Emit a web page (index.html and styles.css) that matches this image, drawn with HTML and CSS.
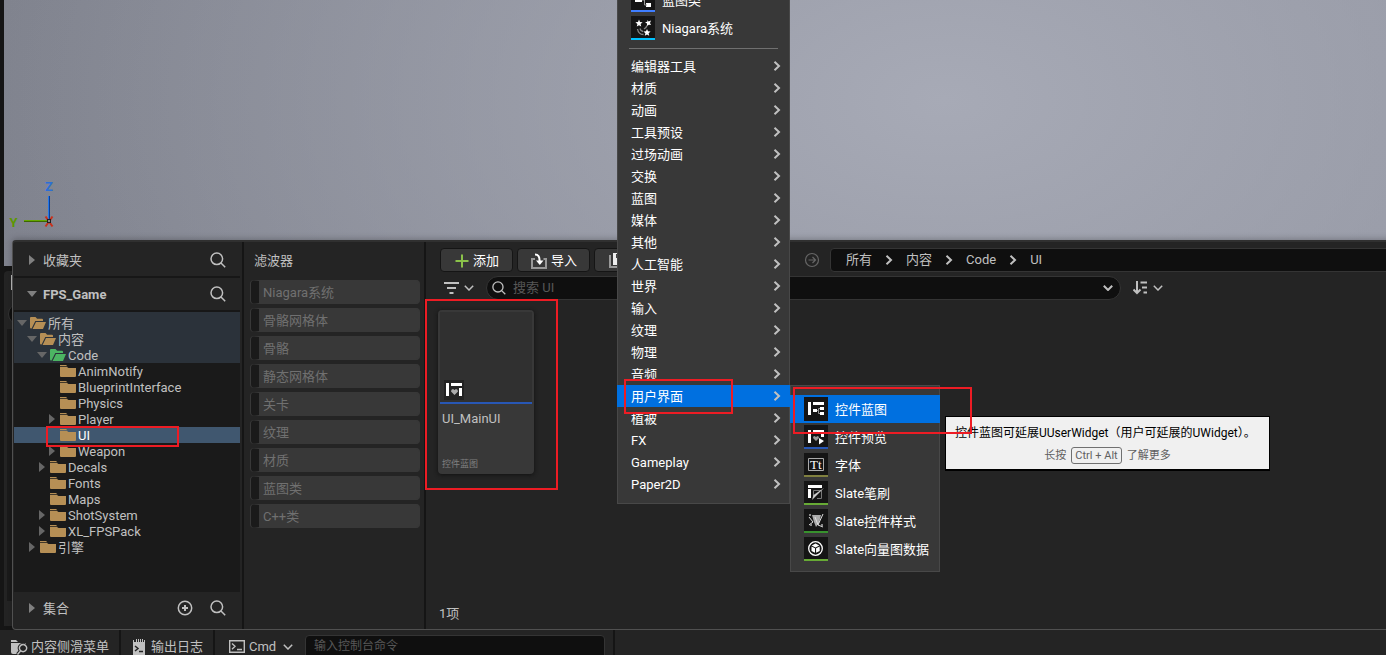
FILE: index.html
```html
<!DOCTYPE html>
<html lang="zh-CN">
<head>
    <meta charset="UTF-8">
    <title>FPS_Game</title>
    <link rel="stylesheet" href="styles.css">
</head>
<body>
<svg class="defs">
    <symbol id="search" viewBox="0 0 16 16"><circle cx="6.8" cy="6.8" r="5.8"/><path d="M11 11l4.2 4.2"/></symbol>
    <symbol id="right" viewBox="0 0 8 10"><path d="M1.5 .8L6 5 1.5 9.200"/></symbol>
    <symbol id="down" viewBox="0 0 10 6"><path d="M.8 .8L5 5 9.2 .8"/></symbol>
    <symbol id="folder" viewBox="0 0 16 12"><path d="M0 0h6l1.500 1.300H0zM0 2h7l1.500 1H16v8q0 1-1 1H1q-1 0-1-1z"/></symbol>
    <symbol id="open" viewBox="0 0 16 12"><path d="M0 1q0-1 1-1h4.500l1.600 1.800H12q1 0 1 1V4H5.300L1.600 11.500H1q-1 0-1-1zM6 5h10l-3 7H2.600z"/></symbol>
</svg>

<div class="viewport">
    <svg class="axis" width="48" height="52" viewBox="0 0 48 52">
        <path d="M37.500 16v24" stroke="#2476e8" stroke-width="1"/><path d="M38.500 16v24" stroke="#0c3f94" stroke-width="1"/>
        <path d="M13 40.500h23" stroke="#64a800"/><path d="M13 41.500h23" stroke="#3d6600"/>
        <path d="M34.500 36.500l7 10M41.500 36.500l-7 10" stroke="#c8301c" stroke-width="2"/>
        <rect x="36.500" y="39.500" width="3" height="3" fill="#888" stroke="#222"/>
        <text x="34" y="10.500" fill="#2c6fd6">Z</text>
        <text x="-1.500" y="46.500" fill="#5c9700">Y</text>
    </svg>
</div>
<div class="behind"><i></i><em></em><b></b></div>

<div class="drawer">
    <div class="sources">
        <div class="section fav"><i class="tri"></i><span>收藏夹</span><svg class="icon"><use href="#search"/></svg></div>
        <div class="section project"><i class="tri open"></i><span>FPS_Game</span><svg class="icon"><use href="#search"/></svg></div>
        <div class="tree">
            <div class="parents">
                <div class="node"><i class="tri open"></i><svg class="folder"><use href="#open"/></svg>所有</div>
                <div class="node d1"><i class="tri open"></i><svg class="folder"><use href="#open"/></svg>内容</div>
                <div class="node d2"><i class="tri open"></i><svg class="folder green"><use href="#open"/></svg>Code</div>
            </div>
            <div class="node d3"><i class="tri none"></i><svg class="folder"><use href="#folder"/></svg>AnimNotify</div>
            <div class="node d3"><i class="tri none"></i><svg class="folder"><use href="#folder"/></svg>BlueprintInterface</div>
            <div class="node d3"><i class="tri none"></i><svg class="folder"><use href="#folder"/></svg>Physics</div>
            <div class="node d3"><i class="tri"></i><svg class="folder"><use href="#folder"/></svg>Player</div>
            <div class="node d3 selected"><i class="tri none"></i><svg class="folder"><use href="#folder"/></svg>UI</div>
            <div class="node d3"><i class="tri"></i><svg class="folder"><use href="#folder"/></svg>Weapon</div>
            <div class="node d2"><i class="tri"></i><svg class="folder"><use href="#folder"/></svg>Decals</div>
            <div class="node d2"><i class="tri none"></i><svg class="folder"><use href="#folder"/></svg>Fonts</div>
            <div class="node d2"><i class="tri none"></i><svg class="folder"><use href="#folder"/></svg>Maps</div>
            <div class="node d2"><i class="tri"></i><svg class="folder"><use href="#folder"/></svg>ShotSystem</div>
            <div class="node d2"><i class="tri"></i><svg class="folder"><use href="#folder"/></svg>XL_FPSPack</div>
            <div class="node d1"><i class="tri"></i><svg class="folder"><use href="#folder"/></svg>引擎</div>
        </div>
        <div class="section collections"><i class="tri"></i><span>集合</span>
            <svg class="icon" viewBox="0 0 16 16"><circle cx="8" cy="8" r="6.700"/><path d="M8 5v6M5 8h6" stroke-width="2"/></svg>
            <svg class="icon"><use href="#search"/></svg></div>
    </div>

    <div class="filters">
        <div class="title">滤波器</div>
        <div class="filter">Niagara系统</div>
        <div class="filter">骨骼网格体</div>
        <div class="filter">骨骼</div>
        <div class="filter">静态网格体</div>
        <div class="filter">关卡</div>
        <div class="filter">纹理</div>
        <div class="filter">材质</div>
        <div class="filter">蓝图类</div>
        <div class="filter">C++类</div>
    </div>

    <div class="assets">
        <div class="toolbar">
            <div class="button add"><svg width="14" height="14" viewBox="0 0 14 14"><path d="M7 .5v13M.5 7h13" stroke="#8bc24a" stroke-width="2"/></svg>添加</div>
            <div class="button import"><svg width="16" height="16" viewBox="0 0 16 16" fill="none"><path d="M4 6H1v9h14V6h-2.500" stroke="#999" stroke-width="2"/><path d="M4 1.500q5 0 4.500 7" stroke="#fff" stroke-width="2"/><path d="M5 7.500h7.500L8.800 12z" fill="#fff"/></svg>导入</div>
            <div class="button save"><svg width="16" height="16" viewBox="0 0 16 16"><path d="M1 2v12h12" stroke="#999" stroke-width="2" fill="none"/><path d="M4 0h12v12H4z" fill="#eee"/><path d="M7 1h5v4H7z" fill="#444"/></svg></div>
            <svg class="forward" width="16" height="16" viewBox="0 0 16 16"><circle cx="8" cy="8" r="6.500"/><path d="M4.500 8h7M8.500 5l3 3-3 3"/></svg>
            <div class="crumbs">
                <span>所有</span><svg class="right"><use href="#right"/></svg>
                <span>内容</span><svg class="right"><use href="#right"/></svg>
                <span>Code</span><svg class="right"><use href="#right"/></svg>
                <span>UI</span>
            </div>
        </div>
        <div class="searchbar">
            <svg class="lines" width="15" height="12" viewBox="0 0 15 12"><path d="M0 1h15M3 6h9M5.500 11h4" stroke="#c0c0c0" stroke-width="2"/></svg>
            <svg class="down"><use href="#down"/></svg>
            <div class="search"><svg class="icon"><use href="#search"/></svg><span>搜索 UI</span><svg class="down bold"><use href="#down"/></svg></div>
            <svg class="sort" width="15" height="14" viewBox="0 0 15 14"><path d="M4 0v12M.5 8.500L4 12l3.500-3.500M7.500 1.500H14M9 6.500h5M10.500 11.500h3.500" fill="none" stroke="#c0c0c0" stroke-width="2"/></svg>
            <svg class="down"><use href="#down"/></svg>
        </div>
        <div class="card">
            <div class="thumb">
                <svg width="20" height="20" viewBox="0 0 20 20"><path d="M0 0h20v20H0z" fill="#222"/><path d="M2 3h3v13H2zM7 3h11v3H7zM15 8h3v8h-3z" fill="#fff"/><path d="M10.500 15L7 11.500Q7 9 9 9l1.500 1L12 9q2 0 2 2.500z" fill="#aaa"/></svg>
            </div>
            <div class="name">UI_MainUI</div>
            <div class="kind">控件蓝图</div>
        </div>
        <div class="count">1项</div>
    </div>
</div>

<div class="status">
    <div class="tab content"><svg width="17" height="16" viewBox="0 0 17 16"><path d="M0 1h5l2 2H0zM0 4h15v2q-5-2-6 3-.5 3 0 6H2q-2 0-2-2z" fill="#c0c0c0"/><path d="M12 5.500a3.600 3.600 0 1 0 .1 0M9.500 12l-3 3.500" fill="none" stroke="#242424" stroke-width="3.500"/><path d="M12 5.500a3.600 3.600 0 1 0 .1 0M9.500 12l-3 3.500" fill="none" stroke="#c0c0c0" stroke-width="1.400"/></svg>内容侧滑菜单</div>
    <div class="tab log"><svg width="12" height="16" viewBox="0 0 12 16"><path d="M0 1h1v2h2V0h1v3h1V0h1v3h1V0h1v3h1V0h1v3h1V1h1v15H0z" fill="#c0c0c0"/><path d="M2 7l3 2.500L2 12M6 12.500h4" fill="none" stroke="#222" stroke-width="1.500"/></svg>输出日志</div>
    <div class="tab cmd"><svg width="16" height="13" viewBox="0 0 16 13" fill="none" stroke="#c0c0c0" stroke-width="1.400"><path d="M.7.7h14.600v11.600H.7zM3 3.500L6 6.300 3 9.200M8 9.500h5"/></svg>Cmd<svg class="down"><use href="#down"/></svg></div>
    <div class="console">输入控制台命令</div>
    <div class="rest"></div>
</div>

<div class="menu main">
    <div class="asset bp"><svg width="24" height="22" viewBox="0 0 24 22"><path d="M4 9h7v5H4zM15 15h5v4h-5z" fill="#fff"/><path d="M11 12h2.500v5H16" stroke="#999" fill="none"/></svg>蓝图类</div>
    <div class="asset niagara"><svg width="24" height="22" viewBox="0 0 24 22"><path d="M8 3.500l1 2.500 2.600.2-2 1.800.6 2.600L8 9.200l-2.200 1.400.6-2.600-2-1.800L7 6zM16.500 4l1 1.500 2.500-1-1 2.500 1 2-2.200-.3-1.800 1.300v-2.500l-2-1.300 2.300-.5zM16 13l1 2.300 2.600.2-2 1.800.6 2.400-2.200-1.300-2.200 1.300.6-2.400-2-1.800 2.600-.2z" fill="#fff"/><path d="M6.500 13q1 5.500 6 5.500M9 12.500q.5 2.500 3 3M16 9.500q-.5 2-3 3.500" stroke="#888" stroke-width="1.300" fill="none"/></svg>Niagara系统</div>
    <div class="line"></div>
    <div class="item">编辑器工具<svg class="right"><use href="#right"/></svg></div>
    <div class="item">材质<svg class="right"><use href="#right"/></svg></div>
    <div class="item">动画<svg class="right"><use href="#right"/></svg></div>
    <div class="item">工具预设<svg class="right"><use href="#right"/></svg></div>
    <div class="item">过场动画<svg class="right"><use href="#right"/></svg></div>
    <div class="item">交换<svg class="right"><use href="#right"/></svg></div>
    <div class="item">蓝图<svg class="right"><use href="#right"/></svg></div>
    <div class="item">媒体<svg class="right"><use href="#right"/></svg></div>
    <div class="item">其他<svg class="right"><use href="#right"/></svg></div>
    <div class="item">人工智能<svg class="right"><use href="#right"/></svg></div>
    <div class="item">世界<svg class="right"><use href="#right"/></svg></div>
    <div class="item">输入<svg class="right"><use href="#right"/></svg></div>
    <div class="item">纹理<svg class="right"><use href="#right"/></svg></div>
    <div class="item">物理<svg class="right"><use href="#right"/></svg></div>
    <div class="item">音频<svg class="right"><use href="#right"/></svg></div>
    <div class="item hover">用户界面<svg class="right"><use href="#right"/></svg></div>
    <div class="item">植被<svg class="right"><use href="#right"/></svg></div>
    <div class="item">FX<svg class="right"><use href="#right"/></svg></div>
    <div class="item">Gameplay<svg class="right"><use href="#right"/></svg></div>
    <div class="item">Paper2D<svg class="right"><use href="#right"/></svg></div>
</div>

<div class="menu sub">
    <div class="asset hover"><svg width="24" height="22" viewBox="0 0 24 22"><path d="M4 5h3v13H4zM9 5h11v3H9zM9 12h4v3H9zM16 10h4v3h-4zM16 15h4v3h-4z" fill="#fff"/><path d="M13 13.500h1.500v3H16M14.500 13.500v-2H16" fill="none" stroke="#999"/></svg>控件蓝图</div>
    <div class="asset blue"><svg width="24" height="22" viewBox="0 0 24 22"><path d="M4 5h3v13H4zM9 5h11v3H9zM17 9h3v3h-3zM15 13l5 3-5 3.500z" fill="#fff"/><path d="M12 16l-3-3q0-2 1.500-2l1.500 1 1.500-1q1.500 0 1.500 2z" fill="#999"/></svg>控件预览</div>
    <div class="asset olive"><svg width="24" height="22" viewBox="0 0 24 22"><path d="M4.500 5.500h15v12h-15z" fill="none" stroke="#aaa"/><text x="6" y="16" class="tt">Tt</text></svg>字体</div>
    <div class="asset green"><svg width="24" height="22" viewBox="0 0 24 22"><path d="M4 4h14v3H4zM4 8h3v9H4z" fill="#fff"/><path d="M9.500 15V9.500h8v8H13" fill="none" stroke="#777"/><path d="M20 7l-8 8-4 4 1.500-5z" fill="#ccc"/></svg>Slate笔刷</div>
    <div class="asset darkgreen"><svg width="24" height="22" viewBox="0 0 24 22"><path d="M8 6h9l-2 8-3 4-2-5z" fill="#aaa"/><path d="M5 8l4 5M5 16l4-3M11 8l3 8 5-11M14 16l5 2" stroke="#ddd" fill="none"/><path d="M5 5h2v2H5zM17 15h2v2h-2zM6 15h2v2H6z" fill="#888"/></svg>Slate控件样式</div>
    <div class="asset green"><svg width="24" height="22" viewBox="0 0 24 22"><circle cx="11.500" cy="11.500" r="6.800" fill="none" stroke="#fff" stroke-width="1.300"/><path d="M7.500 9.500l3.500 1.800v4.500l-3.500-1.900zM15.700 9.500l-3.600 1.800v4.500l3.600-1.900zM11.500 6.500l3.800 2-3.800 1.900-3.800-1.900z" fill="#fff"/></svg>Slate向量图数据</div>
</div>

<div class="tooltip">
    <div>控件蓝图可延展UUserWidget（用户可延展的UWidget）。</div>
    <div class="more">长按<kbd>Ctrl + Alt</kbd>了解更多</div>
</div>

<div class="mark mark-tree"></div>
<div class="mark mark-card"></div>
<div class="mark mark-menu"></div>
<div class="mark mark-sub"></div>
</body>
</html>
```
FILE: styles.css
```css
* {
    box-sizing: border-box;
}

body {
    margin: 0;
    width: 1386px;
    height: 655px;
    position: relative;
    overflow: hidden;
    display: flex;
    flex-direction: column;
    background: #151515;
    color: #c0c0c0;
    font: 13px/16px Roboto, "Noto Sans CJK SC", sans-serif;
}

svg {
    flex: none;
}

.defs {
    display: none;
}

.icon,
.right,
.down,
.forward {
    fill: none;
    stroke: #c0c0c0;
    stroke-width: 1.5;
}

.icon {
    width: 16px;
    height: 16px;
}

.right {
    width: 8px;
    height: 10px;
    stroke-width: 2;
}

.down {
    width: 10px;
    height: 6px;
}

.down.bold {
    stroke-width: 2;
}

.viewport {
    height: 266px;
    flex: none;
    margin-left: 4px;
    padding: 180px 0 0 7px;
    background: radial-gradient(ellipse 1000px 600px at 940px 100px, #a7aab6, rgba(167, 170, 182, 0)), linear-gradient(90deg, #7e818c, #8e919d);
}

.axis {
    display: block;
    overflow: visible;
    font: bold 13px Roboto, sans-serif;
}

.behind {
    width: 20px;
    margin: 5px 0 0 4px;
    height: 355px;
    background: #242424;
    border-radius: 4px 0 0 0;
    padding: 4px 0 0 4px;
}

.behind i {
    display: block;
    width: 2px;
    height: 15px;
    margin-left: 3px;
    background: #c0c0c0;
}

.behind em {
    display: block;
    width: 22px;
    height: 22px;
    margin-top: 13px;
    background: #0f0f0f;
    border: 1px solid #343434;
    border-radius: 11px;
}

.behind b {
    display: block;
    height: 272px;
    margin: 4px 0 0 -1px;
    background: #1a1a1a;
}

.drawer {
    position: absolute;
    left: 12px;
    top: 240px;
    width: 1380px;
    height: 390px;
    display: flex;
    background: #242424;
    border: 1px solid #505050;
    border-top: 2px solid #303030;
    border-radius: 4px 0 0 4px;
    box-shadow: 0 -1px 6px rgba(0, 0, 0, .25);
}

.sources {
    width: 231px;
    padding: 0 2px 0 1px;
    border-right: 2px solid #151515;
    display: flex;
    flex-direction: column;
    flex: none;
}

.section {
    display: flex;
    align-items: center;
    padding: 2px 14px 0 13px;
    height: 36px;
    border-bottom: 2px solid #171717;
    flex: none;
}

.section span {
    flex: 1;
    padding: 1px 0 0 6px;
}

.project {
    height: 34px;
    padding-top: 0;
    font-weight: bold;
}

.collections {
    height: 32px;
    border: 0;
    padding-top: 0;
}

.collections .icon + .icon {
    margin-left: 17px;
}

.tri {
    width: 10px;
    height: 10px;
    flex: none;
    background: #808080;
    clip-path: polygon(2px 0, 8px 5px, 2px 10px);
}

.tri.open {
    clip-path: polygon(0 2px, 10px 2px, 5px 8px);
}

.tri.none {
    visibility: hidden;
}

.tree {
    height: 280px;
    background: #1a1a1a;
}

.tree .tri {
    background: #666;
    margin-top: -2px;
}

.parents {
    padding-top: 3px;
    background: #2b323a;
}

.node {
    height: 16px;
    display: flex;
    align-items: center;
    padding: 2px 0 0 3px;
    white-space: nowrap;
}

.d1 {
    padding-left: 13px;
}

.d2 {
    padding-left: 23px;
}

.d3 {
    padding-left: 33px;
}

.selected {
    background: #40576f;
    color: #fff;
}

.folder {
    width: 16px;
    height: 12px;
    margin: -2px 2px 0 3px;
    fill: #b68f55;
}

.folder.green {
    fill: #4cb563;
}

.filters {
    width: 182px;
    padding: 11px 4px 0 7px;
    border-right: 2px solid #151515;
    flex: none;
}

.title {
    margin: 0 0 11px 3px;
}

.filter {
    height: 24px;
    margin-bottom: 4px;
    padding-left: 4px;
    border: 1px solid #383838;
    border-left-width: 8px;
    border-left-color: #1a1a1a;
    border-radius: 4px;
    background: #383838;
    color: #707070;
    line-height: 24px;
    box-shadow: -1px 0 #383838;
}

.assets {
    flex: 1;
    padding: 6px 0 0 14px;
    display: flex;
    flex-direction: column;
}

.toolbar {
    display: flex;
    align-items: center;
    height: 24px;
}

.button {
    height: 24px;
    width: 73px;
    margin-right: 4px;
    padding: 1px 0 0 1px;
    display: flex;
    align-items: center;
    justify-content: center;
    gap: 4px;
    background: #383838;
    border: 1px solid #151515;
    border-radius: 4px;
    color: #fff;
}

.save {
    justify-content: flex-start;
    padding-left: 14px;
}

.forward {
    margin-left: 133px;
    stroke: #666;
    stroke-width: 1.2;
}

.crumbs {
    flex: 1;
    height: 24px;
    display: flex;
    align-items: center;
    margin-left: 10px;
    padding-left: 15px;
    background: #0f0f0f;
    border: 1px solid #343434;
    border-radius: 4px 0 0 4px;
}

.crumbs .right {
    margin: 0 13px;
}

.searchbar {
    height: 24px;
    margin-top: 4px;
    display: flex;
    align-items: center;
    padding-left: 4px;
}

.searchbar > .down {
    margin-left: 5px;
}

.search {
    width: 635px;
    height: 24px;
    margin: 0 12px;
    padding: 0 7px 0 5px;
    display: flex;
    align-items: center;
    background: #0f0f0f;
    border: 1px solid #343434;
    border-radius: 12px;
    color: #575757;
}

.search .icon {
    width: 14px;
    height: 14px;
}

.search span {
    flex: 1;
    padding-left: 7px;
}

.card {
    width: 96px;
    height: 164px;
    margin: 10px 0 0 -2px;
    padding: 2px;
    background: #383838;
    border-radius: 4px;
    box-shadow: 0 1px 4px #111;
}

.thumb {
    height: 92px;
    padding: 68px 0 0 4px;
    background: #303030;
    border-bottom: 2px solid #2857b5;
}

.thumb svg {
    display: block;
}

.name {
    margin: 7px 0 0 2px;
}

.kind {
    margin: 29px 0 0 2px;
    font-size: 9px;
    color: #808080;
}

.count {
    margin: 132px 0 0 -1px;
}

.status {
    position: absolute;
    left: 0;
    top: 630px;
    width: 1386px;
    height: 25px;
    display: flex;
    background: #242424;
}

.tab {
    height: 33px;
    display: flex;
    align-items: center;
    gap: 4px;
    border-right: 2px solid #151515;
    flex: none;
}

.content {
    width: 121px;
    padding-left: 11px;
    gap: 3px;
}

.log {
    width: 94px;
    padding-left: 12px;
    gap: 6px;
}

.cmd {
    width: 90px;
    padding-left: 14px;
    border: 0;
}

.cmd .down {
    margin-left: 3px;
}

.console {
    width: 300px;
    height: 30px;
    margin-top: 5px;
    padding: 2px 8px;
    background: #0f0f0f;
    border: 1px solid #343434;
    border-radius: 4px;
    color: #575757;
    font-size: 12px;
}

.rest {
    width: 10px;
    border-right: 2px solid #151515;
}

.menu {
    position: absolute;
    background: #383838;
    border: 1px solid #484848;
    color: #fff;
    white-space: nowrap;
}

.main {
    left: 617px;
    top: -15px;
    width: 173px;
    height: 519px;
}

.sub {
    left: 790px;
    top: 385px;
    width: 150px;
    height: 187px;
    padding-top: 9px;
}

.asset {
    height: 28px;
    display: flex;
    align-items: center;
    padding: 2px 0 0 13px;
    gap: 7px;
}

.asset svg {
    box-sizing: content-box;
    margin-top: -2px;
    background: #151515;
    border-bottom: 2px solid #151515;
}

.bp svg {
    border-color: #3f7eff;
}

.niagara svg {
    border-color: #00c2ff;
}

.blue svg {
    border-color: #2857b5;
}

.olive svg {
    border-color: #80803f;
}

.green svg {
    border-color: #67aa35;
}

.darkgreen svg {
    border-color: #37912d;
}

.tt {
    font: 13px "Liberation Serif", serif;
    fill: #fff;
}

.line {
    height: 1px;
    margin: 6px 11px;
    background: #707070;
}

.item {
    height: 22px;
    display: flex;
    align-items: center;
    justify-content: space-between;
    padding: 2px 8px 0 13px;
}

.item .right {
    margin-top: -2px;
}

.hover {
    margin: 0 -1px;
    padding-left: 14px;
    padding-right: 9px;
    background: #0070e0;
}

.menu .right {
    stroke: #c0c0c0;
}

.tooltip {
    position: absolute;
    left: 945px;
    top: 416px;
    width: 325px;
    height: 55px;
    padding: 8px 0 0 9px;
    background: #f0f0f0;
    border: solid #000;
    border-width: 1px 1px 2px;
    color: #000;
    font-size: 12px;
    white-space: nowrap;
}

.more {
    margin-top: 6px;
    padding-right: 9px;
    display: flex;
    justify-content: center;
    gap: 5px;
    color: #606060;
    font-size: 11px;
    line-height: 18px;
}

kbd {
    height: 17px;
    padding: 0 3px;
    border: 1px solid #707070;
    border-radius: 3px;
    font-family: inherit;
    line-height: 16px;
}

.mark {
    position: absolute;
    border: 2px solid #ed1c24;
}

.mark-tree {
    left: 46px;
    top: 426px;
    width: 133px;
    height: 21px;
}

.mark-card {
    left: 425px;
    top: 299px;
    width: 133px;
    height: 191px;
}

.mark-menu {
    left: 624px;
    top: 379px;
    width: 109px;
    height: 35px;
}

.mark-sub {
    left: 793px;
    top: 387px;
    width: 179px;
    height: 47px;
}
```
